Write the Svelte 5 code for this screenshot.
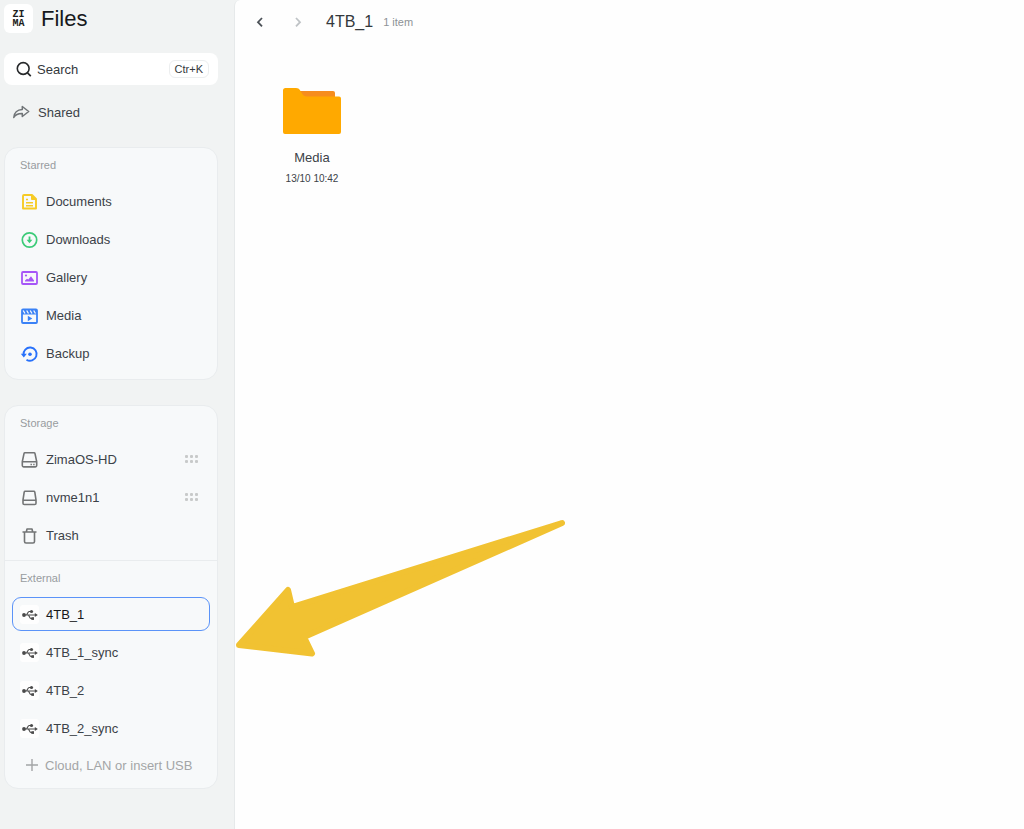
<script lang="ts">
  const starred = [
    { name: 'Documents', icon: 'document' },
    { name: 'Downloads', icon: 'download' },
    { name: 'Gallery', icon: 'gallery' },
    { name: 'Media', icon: 'media' },
    { name: 'Backup', icon: 'backup' }
  ];

  const storage = [
    { name: 'ZimaOS-HD', icon: 'disk-dots', menu: true },
    { name: 'nvme1n1', icon: 'disk', menu: true },
    { name: 'Trash', icon: 'trash', menu: false }
  ];

  const external = ['4TB_1', '4TB_1_sync', '4TB_2', '4TB_2_sync'];

  const files = [{ name: 'Media', date: '13/10 10:42' }];

  let selected = '4TB_1';
  let query = '';
</script>

{#snippet icon(name: string)}
  <svg class="icon" viewBox="0 0 20 20" fill="none" aria-hidden="true">
    {#if name === 'document'}
      <path d="M4 4h8l4 4v9.500H3V5a1 1 0 0 1 1-1z" stroke="#f6cb25" stroke-width="1.900" stroke-linejoin="round" />
      <path d="M11.500 4v4.500H16z" fill="#f6cb25" stroke="#f6cb25" />
      <path d="M6 8.500h2M6 11.700h7M6 14.700h7" stroke="#f6cb25" stroke-width="1.500" />
    {:else if name === 'download'}
      <circle cx="9.500" cy="11" r="7.200" stroke="#3ccb78" stroke-width="1.700" />
      <path d="M9.500 7.500v5" stroke="#3ccb78" stroke-width="1.800" />
      <path d="M6.600 10.800h5.800l-2.900 3.500z" fill="#3ccb78" />
    {:else if name === 'gallery'}
      <rect x="2" y="5" width="15" height="12" rx="1" stroke="#a656f7" stroke-width="1.800" />
      <circle cx="6" cy="8.500" r="1.100" fill="#a656f7" />
      <path d="M5 14.500v-1l2-1.700 1.300.7L11 9.300l3 4.200v1z" fill="#a656f7" />
    {:else if name === 'media'}
      <rect x="2" y="4.500" width="15" height="13.500" rx="1" stroke="#3b82f6" stroke-width="1.800" />
      <path d="M2 4.500h15v5H2z" fill="#3b82f6" />
      <path d="M3.200 5.500l1.800 3M6.700 5.500l1.800 3M10.200 5.500l1.800 3M13.700 5.500l1.800 3" stroke="#f7f9fa" stroke-width="1.300" />
      <path d="M7.800 10.800l4.500 2.700-4.500 2.700z" fill="#3b82f6" />
    {:else if name === 'backup'}
      <path d="M3.500 12A6.600 6.600 0 1 1 6.500 16.700" stroke="#2871fa" stroke-width="1.900" />
      <path d="M.8 10.700h6l-3 3.800z" fill="#2871fa" />
      <circle cx="10" cy="11.300" r="1.800" fill="#2871fa" />
    {:else if name === 'disk-dots'}
      <path d="M5 3.800h9a1 1 0 0 1 1 .8l1.700 8v4a1.300 1.300 0 0 1-1.300 1.300H3.600a1.300 1.300 0 0 1-1.300-1.300v-4L4 4.600a1 1 0 0 1 1-.8zM2.300 12.800h14.400" stroke="#737576" stroke-width="1.600" stroke-linejoin="round" />
      <path d="M10.500 15.400h1.400M13.200 15.400h1.400" stroke="#737576" stroke-width="1.500" />
    {:else if name === 'disk'}
      <path d="M5.200 4.300h8.600a1 1 0 0 1 1 .8l1.200 7.700v3.400a1.300 1.300 0 0 1-1.300 1.300H4.300A1.300 1.300 0 0 1 3 16.200v-3.400l1.200-7.700a1 1 0 0 1 1-.8zM3 13.300h13" stroke="#737576" stroke-width="1.600" stroke-linejoin="round" />
    {:else if name === 'trash'}
      <path d="M2.500 7h14M6.300 7l.7-3h5l.7 3M4.500 7v9.500A1.500 1.500 0 0 0 6 18h7a1.500 1.500 0 0 0 1.500-1.500V7" stroke="#737576" stroke-width="1.600" stroke-linejoin="round" />
    {:else if name === 'usb'}
      <rect x="0" y="1" width="19" height="19" rx="3" fill="#fefefe" />
      <circle cx="4" cy="11" r="1.900" fill="#4b4b4b" />
      <path d="M4 11h12M6.300 11c1 0 1.300-3.500 3-3.500h2M8 11c1.200 0 1.400 3.500 3 3.500h2" stroke="#4b4b4b" stroke-width="1.100" />
      <path d="M14.800 9l3 2-3 2z" fill="#4b4b4b" />
      <circle cx="11.500" cy="7.500" r="1.600" fill="#4b4b4b" />
      <rect x="11.300" y="13.200" width="2.700" height="2.700" fill="#4b4b4b" />
    {:else if name === 'shared'}
      <path d="M10.300 4.500l6.400 5-6.400 5v-3C6 11.400 3.500 12.500 1.800 15.500c.2-4.700 3.500-7.800 8.500-8z" stroke="#707477" stroke-width="1.500" stroke-linejoin="round" />
    {/if}
  </svg>
{/snippet}

<div class="app">
  <aside class="sidebar">
    <header class="brand">
      <span class="logo"><span>ZI</span><span>MA</span></span>
      <h1>Files</h1>
    </header>

    <label class="search">
      <svg viewBox="0 0 16 16" fill="none" aria-hidden="true">
        <circle cx="7.200" cy="7.500" r="5.900" stroke="#27292b" stroke-width="1.600" />
        <path d="M11.500 11.800l3.300 3.300" stroke="#27292b" stroke-width="1.700" />
      </svg>
      <input type="text" placeholder="Search" aria-label="Search" bind:value={query} />
      <kbd>Ctr+K</kbd>
    </label>

    <a class="item shared" href="#shared">
      {@render icon('shared')}
      <span class="name">Shared</span>
    </a>

    <nav class="card" aria-label="Starred">
      <h2>Starred</h2>
      {#each starred as entry}
        <a class="item" href="#{entry.name}">
          {@render icon(entry.icon)}
          <span class="name">{entry.name}</span>
        </a>
      {/each}
    </nav>

    <nav class="card" aria-label="Storage">
      <h2>Storage</h2>
      {#each storage as entry}
        <div class="row">
          <a class="item" href="#{entry.name}">
            {@render icon(entry.icon)}
            <span class="name">{entry.name}</span>
          </a>
          {#if entry.menu}
            <button class="grip" aria-label="{entry.name} apps">
              <svg viewBox="0 0 14 10" fill="#c8caca" aria-hidden="true">
                {#each [0, 5, 10] as x}
                  <rect {x} y="1" width="3" height="3" rx="1" />
                  <rect {x} y="6" width="3" height="3" rx="1" />
                {/each}
              </svg>
            </button>
          {/if}
        </div>
      {/each}

      <hr />

      <h2>External</h2>
      {#each external as name}
        <a class="item" class:selected={name === selected} href="#{name}" onclick={() => (selected = name)}>
          {@render icon('usb')}
          <span class="name">{name}</span>
        </a>
      {/each}
      <button class="item add">
        <svg viewBox="0 0 14 14" fill="none" aria-hidden="true">
          <path d="M7 1v12M1 7h12" stroke="#a3a5a6" stroke-width="1.400" />
        </svg>
        <span class="name">Cloud, LAN or insert USB</span>
      </button>
    </nav>
  </aside>

  <main>
    <div class="toolbar">
      <button class="arrow" aria-label="Back">
        <svg viewBox="0 0 20 20" fill="none"><path d="M12 6l-4 4.200 4 4.200" stroke="#4b5157" stroke-width="1.800" /></svg>
      </button>
      <button class="arrow" aria-label="Forward">
        <svg viewBox="0 0 20 20" fill="none"><path d="M8 6l4 4.200-4 4.200" stroke="#bfc3c6" stroke-width="1.800" /></svg>
      </button>
      <h2 class="title">{selected}</h2>
      <span class="count">1 item</span>
    </div>

    <div class="grid">
      {#each files as file}
        <button class="file">
          <svg viewBox="0 0 58 48" aria-hidden="true">
            <path d="M14 3h36a2 2 0 0 1 2 2v8H14z" fill="#f68d1e" />
            <path d="M2.500 0H13c2 0 3 .8 4 2.300l2 3.200c1.500 2.300 2.500 3 5 3h32a2 2 0 0 1 2 2V44a2 2 0 0 1-2 2H2a2 2 0 0 1-2-2V2.500A2.500 2.500 0 0 1 2.500 0z" fill="#ffa900" />
          </svg>
          <span class="file-name">{file.name}</span>
          <span class="file-date">{file.date}</span>
        </button>
      {/each}
    </div>
  </main>

  <svg class="pointer" viewBox="235 517 332 142" aria-hidden="true">
    <path
      d="M239 645L288 590L292 607L562 523L304 637L312 653.500Z"
      fill="#f1c232"
      stroke="#f1c232"
      stroke-width="6"
      stroke-linejoin="round"
    />
  </svg>
</div>

<style>
  :global(body) {
    margin: 0;
    background: #f1f3f3;
  }

  .app {
    position: relative;
    display: flex;
    min-height: 100vh;
    font-family: 'Liberation Sans', Arial, sans-serif;
    font-size: 13px;
    color: #3c4248;
  }

  button {
    padding: 0;
    border: 0;
    background: none;
    font: inherit;
    color: inherit;
  }

  h1,
  h2 {
    margin: 0;
    font-weight: 400;
  }

  svg {
    display: block;
    flex: none;
  }

  .sidebar {
    flex: none;
    box-sizing: border-box;
    width: 234px;
    padding: 4px 16px 24px 4px;
  }

  .brand {
    display: flex;
    align-items: center;
    gap: 8px;
    margin-bottom: 20px;
  }

  .logo {
    display: grid;
    place-content: center;
    width: 29px;
    height: 29px;
    border-radius: 6px;
    background: #fff;
    color: #1c1e20;
    font: bold 10px/9px 'Liberation Mono', monospace;
  }

  h1 {
    font-size: 22px;
    line-height: 26px;
    color: #17191c;
  }

  .search {
    display: flex;
    align-items: center;
    height: 32px;
    padding: 0 9px 0 12px;
    border-radius: 8px;
    background: #fff;
  }

  .search svg {
    width: 16px;
    height: 16px;
  }

  .search input {
    flex: 1;
    min-width: 0;
    padding: 0 0 0 5px;
    border: 0;
    outline: 0;
    background: none;
    font: inherit;
    color: #33383c;
  }

  .search input::placeholder {
    color: #33383c;
    opacity: 1;
  }

  kbd {
    padding: 0 5px;
    border: 1px solid #eceeef;
    border-radius: 6px;
    font: 11px/16px 'Liberation Sans', Arial, sans-serif;
    color: #33383c;
  }

  .item {
    display: flex;
    align-items: center;
    gap: 6px;
    box-sizing: border-box;
    height: 34px;
    margin: 2px 0;
    padding: 0 7px;
    border: 1px solid transparent;
    border-radius: 9px;
    color: inherit;
    text-decoration: none;
  }

  .item.selected {
    border-color: #5b93f8;
    color: #16181b;
  }

  .icon {
    width: 20px;
    height: 20px;
  }

  .shared {
    margin: 10px 0 18px;
  }

  .card {
    display: flex;
    flex-direction: column;
    padding: 0 7px 7px;
    border: 1px solid #e9ecee;
    border-radius: 14px;
    background: #f7f9fa;
  }

  .card + .card {
    margin-top: 25px;
  }

  .card h2 {
    padding-left: 8px;
    font-size: 11px;
    line-height: 34px;
    color: #989c9f;
  }

  .row {
    display: flex;
    align-items: center;
  }

  .row .item {
    flex: 1;
  }

  .grip {
    padding: 4px 11px;
  }

  .grip svg {
    width: 14px;
    height: 10px;
  }

  hr {
    align-self: stretch;
    margin: 6px -7px 0;
    border: 0;
    border-top: 1px solid #e9ecee;
  }

  .add {
    height: 32px;
    margin: 2px 0 0;
    padding-left: 12px;
    color: #a3a5a6;
  }

  .add svg {
    width: 14px;
    height: 14px;
  }

  main {
    flex: 1;
    min-width: 0;
    border-left: 1px solid #e6e9ea;
    border-top-left-radius: 6px;
    background: #fefefe;
  }

  .toolbar {
    display: flex;
    align-items: center;
    height: 44px;
    padding-left: 15px;
  }

  .arrow {
    margin-right: 18px;
  }

  .arrow svg {
    width: 20px;
    height: 20px;
  }

  .title {
    font-size: 16px;
    color: #33383c;
  }

  .count {
    margin-left: 10px;
    font-size: 11px;
    color: #8d9296;
  }

  .grid {
    display: grid;
    grid-template-columns: repeat(auto-fill, 120px);
    gap: 16px;
    padding: 44px 17px;
  }

  .file {
    display: flex;
    flex-direction: column;
    align-items: center;
  }

  .file svg {
    width: 58px;
    height: 48px;
    margin-bottom: 12px;
  }

  .file-name {
    line-height: 20px;
  }

  .file-date {
    font-size: 10px;
    line-height: 22px;
  }

  .pointer {
    position: absolute;
    top: 517px;
    left: 235px;
    width: 332px;
    height: 142px;
    pointer-events: none;
  }
</style>
